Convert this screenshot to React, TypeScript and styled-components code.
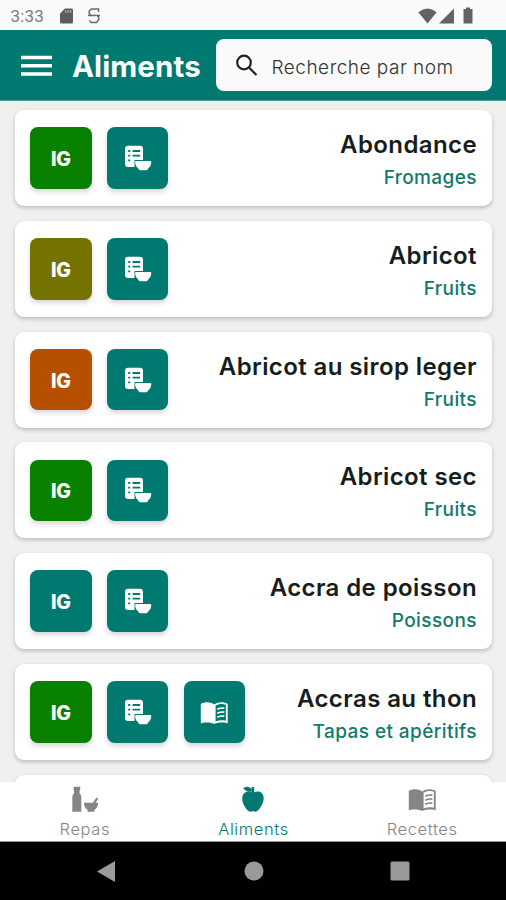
import React from 'react';
import styled, { createGlobalStyle } from 'styled-components';

const teal = '#007a70';

const GlobalStyle = createGlobalStyle`
  * { box-sizing: border-box; }
  body { margin: 0; background: #f0f0f0; }
`;

const Screen = styled.div`
  width: 506px;
  height: 900px;
  display: flex;
  flex-direction: column;
  overflow: hidden;
  background: #f0f0f0;
  font-family: Inter, 'Liberation Sans', sans-serif;
`;

const StatusBar = styled.div`
  height: 30px;
  flex: none;
  display: flex;
  align-items: center;
  justify-content: space-between;
  padding: 1px 33px 0 10.5px;
  background: #fafafa;
  color: #6a6a6a;
`;

const StatusGroup = styled.div`
  display: flex;
  align-items: center;
`;

const Clock = styled.span`
  width: 49.5px;
  font: 400 17px/20px Roboto, sans-serif;
  letter-spacing: 0.2px;
  color: #7a7a7a;
`;

const Icon = styled.svg<{ $ml?: number }>`
  display: block;
  flex: none;
  margin-left: ${(p) => p.$ml ?? 0}px;
`;

const Header = styled.header`
  height: 71px;
  flex: none;
  display: flex;
  align-items: center;
  padding: 0 14px 0 21px;
  background: ${teal};
  border-bottom: 1px solid #4c9c95;
`;

const Title = styled.h1`
  margin: 2px 0 0 20px;
  width: 143.5px;
  font-size: 29.5px;
  font-weight: 700;
  line-height: 36px;
  letter-spacing: 0.1px;
  color: #fff;
  white-space: nowrap;
`;

const SearchField = styled.div`
  flex: 1;
  height: 52px;
  display: flex;
  align-items: center;
  padding-left: 19px;
  border-radius: 8px;
  background: #fafafa;
`;

const Placeholder = styled.span`
  margin: 4px 0 0 13px;
  font-size: 19px;
  font-weight: 300;
  letter-spacing: 0.5px;
  color: #333;
  white-space: nowrap;
`;

const List = styled.main`
  flex: 1;
  min-height: 0;
  overflow: hidden;
  display: flex;
  flex-direction: column;
  gap: 14.8px;
  padding: 9px 14px 0 15px;
`;

const Card = styled.article`
  height: 96px;
  flex: none;
  display: flex;
  align-items: center;
  gap: 15.3px;
  padding: 0 15px;
  border-radius: 9px;
  background: #fff;
  box-shadow: 0 2px 4px rgba(0, 0, 0, 0.22);
`;

const Tile = styled.div<{ $color: string }>`
  width: 61.6px;
  height: 61.5px;
  flex: none;
  display: flex;
  align-items: center;
  justify-content: center;
  border-radius: 8px;
  background: ${(p) => p.$color};
  box-shadow: 0 3px 5px rgba(0, 0, 0, 0.16);
`;

const IndexLabel = styled.span`
  padding-top: 2px;
  color: #fff;
  font-size: 19.5px;
  font-weight: 800;
  letter-spacing: -0.4px;
`;

const Info = styled.div`
  flex: 1;
  text-align: right;
  white-space: nowrap;
`;

const Name = styled.div`
  font-size: 24px;
  font-weight: 600;
  line-height: 33px;
  letter-spacing: 0.4px;
  padding-top: 3px;
  color: #161d1b;
`;

const Category = styled.div`
  font-size: 19px;
  font-weight: 500;
  line-height: 26px;
  letter-spacing: 0.42px;
  padding-top: 4px;
  color: #12796c;
`;

const TabBar = styled.nav`
  height: 60px;
  flex: none;
  display: grid;
  grid-template-columns: repeat(3, 1fr);
  background: #fff;
  border-bottom: 1px solid #999;
`;

const Tab = styled.div<{ $active?: boolean }>`
  display: flex;
  flex-direction: column;
  align-items: center;
  padding: 4px 0 0 1px;
  color: ${(p) => (p.$active ? teal : '#858585')};
`;

const TabGlyph = styled.div`
  height: 27px;
  display: flex;
  align-items: center;
`;

const TabLabel = styled.span`
  margin-top: 6px;
  font-size: 16.5px;
  font-weight: 300;
  line-height: 20px;
  letter-spacing: 0.6px;
`;

const SystemBar = styled.div`
  height: 58px;
  flex: none;
  display: flex;
  align-items: center;
  justify-content: space-between;
  padding: 0 96px 0 97px;
  background: #000;
  color: #9a9a9a;
`;

const PortionIcon = () => (
  <Icon width="28" height="26" viewBox="0 0 28 26">
    <path fill="#fff" d="M4 .8h12a3 3 0 0 1 3 3V15h-8.500v7H4a3 3 0 0 1-3-3V3.800a3 3 0 0 1 3-3z" />
    <path stroke={teal} strokeWidth="1.800" d="M4.200 6h2M8.600 6h7.600M4.200 10.700h2M8.600 10.700h7.600M4.200 15.400h2" />
    <path fill="#fff" d="M12.200 16h14q1.200 0 1.100 1.200c-.2 2.600-1.200 4.600-2.800 5.700l-.9 1.500q-.4.800-1.300.8h-6.200q-.9 0-1.300-.8l-.9-1.500c-1.600-1.100-2.600-3.100-2.800-5.700q-.1-1.200 1.100-1.200z" />
  </Icon>
);

const BookIcon = ({ page }: { page: string }) => (
  <Icon width="28.5" height="24" viewBox="0 0 29 25">
    <path fill="currentColor" d="M.5 3C5 .7 10.500.9 14.500 3.600 18.500.9 24 .7 28.500 3v20.500c-1.500-.8-3-.8-4.500-1-3.500-.4-6.500 0-9.500 1.500-3-1.500-6-1.900-9.500-1.500-1.500.2-3 .2-4.500 1z" />
    <path fill={page} d="M15.900 5C19 3 23 2.600 26.600 4v16.500c-4-.9-7.500-.5-10.700.9z" />
    <path fill="none" stroke="currentColor" strokeWidth="1.700" d="M17.600 8.500q4-1.700 7.400-1.100M17.600 12.700q4-1.700 7.400-1.100M17.600 16.900q4-1.700 7.400-1.100" />
  </Icon>
);

const RecipeGlyph = styled.span`
  display: flex;
  padding-top: 3px;
  color: #fff;
`;

const MealIcon = () => (
  <Icon width="28" height="27" viewBox="0 0 28 27">
    <path fill="currentColor" d="M2.600.8h6.600v3.400H8.600v3c1.200 1.300 1.700 2.800 1.700 4.500v14H1.300v-14c0-1.700.5-3.200 1.700-4.500v-3h-.4zM13 16.700h8.800l3.700-5.200 1.700 1.200-2.700 4h2.600c0 3.700-1.400 6-3.700 7v2H16.600v-2c-2.300-1-3.600-3.300-3.600-7z" />
  </Icon>
);

const AppleIcon = () => (
  <Icon width="24" height="27" viewBox="0 0 24 27">
    <path fill="currentColor" d="M2.300 2.200C5.500-.2 8.800.3 10.600 3.300V.9h2.600v5.300C15.500 5.300 18.400 5 20.600 7c3.400 3.200 2.200 8.700-.3 13-2.100 3.900-4.400 6.300-6.900 5.500q-1.400-.5-2.800 0c-2.600.8-5.200-1.700-7.200-5.500C1.200 16 0 10.300 3.200 7.300c2-1.900 5-1.800 7.400-1l-.1-1.100C7.800 6.500 4.400 5.200 2.300 2.200z" />
  </Icon>
);

type Food = { name: string; category: string; color: string; recipe?: boolean };

const foods: Food[] = [
  { name: 'Abondance', category: 'Fromages', color: '#088000' },
  { name: 'Abricot', category: 'Fruits', color: '#757300' },
  { name: 'Abricot au sirop leger', category: 'Fruits', color: '#b65000' },
  { name: 'Abricot sec', category: 'Fruits', color: '#088000' },
  { name: 'Accra de poisson', category: 'Poissons', color: teal },
  { name: 'Accras au thon', category: 'Tapas et apéritifs', color: '#088000', recipe: true },
];

export default function App() {
  return (
    <Screen>
      <GlobalStyle />
      <StatusBar>
        <StatusGroup>
          <Clock>3:33</Clock>
          <Icon width="13" height="16" viewBox="0 0 13 16">
            <path fill="#5c5c5c" d="M5 .5h6.500q1.500 0 1.500 1.500v12q0 1.500-1.500 1.500h-10Q0 15.500 0 14V5.500z" />
            <path stroke="#bbb" strokeWidth="1.200" d="M5.700 2.300v2.500M8.200 2.300v2.500M10.700 2.300v2.500" />
          </Icon>
          <Icon $ml={15} width="12" height="16" viewBox="0 0 12 16" fill="none" stroke="#686868" strokeWidth="1.500">
            <path d="M10.500 4V1H3.500L1.200 3v2.500l2 2h6l1.500 1.700v2.500L8.500 14.500h-5L1.200 12.500M0 7.500h12" />
          </Icon>
        </StatusGroup>
        <StatusGroup>
          <Icon width="19" height="16" viewBox="0 0 19 16">
            <path fill="#636363" d="M.3 4.200Q9.500-3 18.700 4.200L9.500 15.500z" />
          </Icon>
          <Icon $ml={2} width="15" height="16" viewBox="0 0 15 16">
            <path fill="#636363" d="M15 .5v15H0z" />
          </Icon>
          <Icon $ml={9} width="10" height="17" viewBox="0 0 10 17">
            <path fill="#636363" d="M3 .5h4V2h2.500v14.500h-9V2H3z" />
          </Icon>
        </StatusGroup>
      </StatusBar>
      <Header>
        <Icon width="31" height="24" viewBox="0 0 31 24">
          <path stroke="#fff" strokeWidth="3.400" d="M0 4.500h31M0 12.700h31M0 21h31" />
        </Icon>
        <Title>Aliments</Title>
        <SearchField>
          <Icon width="24" height="24" viewBox="0 0 24 24" fill="none" stroke="#222" strokeWidth="2.200">
            <circle cx="9" cy="9.500" r="6.800" />
            <path d="M14 14.500l7.500 7.500" />
          </Icon>
          <Placeholder>Recherche par nom</Placeholder>
        </SearchField>
      </Header>
      <List>
        {foods.map((food) => (
          <Card key={food.name}>
            <Tile $color={food.color}><IndexLabel>IG</IndexLabel></Tile>
            <Tile $color={teal}><PortionIcon /></Tile>
            {food.recipe && (
              <Tile $color={teal}>
                <RecipeGlyph><BookIcon page={teal} /></RecipeGlyph>
              </Tile>
            )}
            <Info>
              <Name>{food.name}</Name>
              <Category>{food.category}</Category>
            </Info>
          </Card>
        ))}
        <Card />
      </List>
      <TabBar>
        <Tab><TabGlyph><MealIcon /></TabGlyph><TabLabel>Repas</TabLabel></Tab>
        <Tab $active><TabGlyph><AppleIcon /></TabGlyph><TabLabel>Aliments</TabLabel></Tab>
        <Tab><TabGlyph><BookIcon page="#fff" /></TabGlyph><TabLabel>Recettes</TabLabel></Tab>
      </TabBar>
      <SystemBar>
        <Icon width="18" height="21" viewBox="0 0 19 22"><path fill="currentColor" d="M19 0v22L0 11z" /></Icon>
        <Icon $ml={2} width="20" height="20" viewBox="0 0 20 20"><circle cx="10" cy="10" r="9.500" fill="currentColor" /></Icon>
        <Icon width="20" height="20" viewBox="0 0 20 20"><rect x=".5" y=".5" width="19" height="19" rx="1.500" fill="currentColor" /></Icon>
      </SystemBar>
    </Screen>
  );
}
